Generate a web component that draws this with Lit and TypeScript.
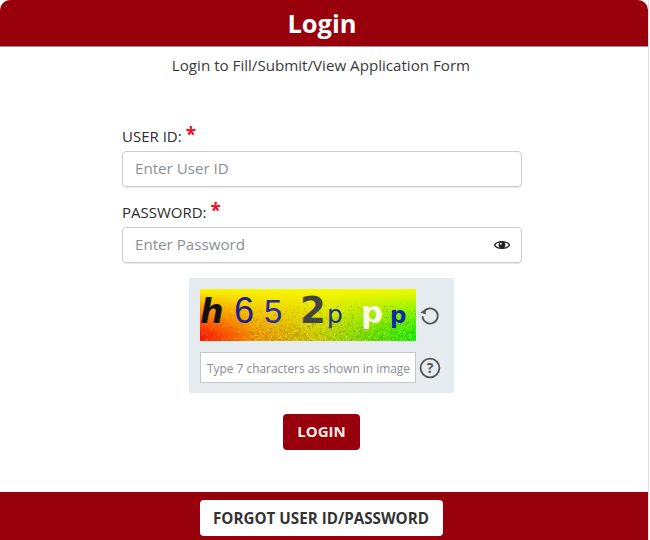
import { LitElement, html, css, svg } from "lit";
import { customElement } from "lit/decorators.js";

function speckles() {
  const out = [];
  let s = 12345;
  const r = () => ((s = (s * 1103515245 + 12345) & 0x7fffffff) / 0x7fffffff);
  for (let i = 0; i < 1700; i++) {
    const x = r() * 216;
    const t = r();
    const y = 12 + Math.sqrt(t) * 40;
    if (x < 50 && r() < 0.8) continue;
    const light = r() > 0.45;
    out.push(svg`<rect x=${x.toFixed(1)} y=${y.toFixed(1)} width="1" height="1" fill=${light ? "#f8ec90" : "#7a6614"} opacity=${(0.2 + r() * 0.4).toFixed(2)}></rect>`);
  }
  return out;
}

const SPECKS = speckles();

@customElement("app-root")
export class AppRoot extends LitElement {
  static styles = css`
    :host {
      display: block;
      width: 650px;
      height: 540px;
      overflow: hidden;
      background: #fff;
      font-family: "Open Sans", "Noto Sans", sans-serif;
      color: #333;
    }
    .card {
      width: 649px;
      height: 540px;
      box-sizing: border-box;
      border-right: 1px solid #ddd;
      display: flex;
      flex-direction: column;
    }
    .head {
      height: 47px;
      box-sizing: border-box;
      flex: none;
      background: #98000c;
      border-radius: 10px 10px 0 0;
      border-bottom: 1px solid #999;
      color: #fff;
      font-size: 25.5px;
      font-weight: 700;
      display: flex;
      align-items: center;
      justify-content: center;
      padding-right: 4px;
    }
    .sub {
      margin: 8px 0 0;
      padding-right: 6px;
      text-align: center;
      font-size: 15.15px;
      line-height: 20px;
      color: #3a3a3a;
    }
    .form {
      width: 400px;
      margin: 51px 0 0 122px;
      display: flex;
      flex-direction: column;
    }
    .label {
      font-size: 15px;
      font-weight: 500;
      line-height: 20px;
      height: 20px;
      color: #2b2b2b;
      display: flex;
      align-items: center;
      gap: 4px;
    }
    .star {
      color: #e8112d;
      font-size: 19px;
      font-weight: 700;
      line-height: 16px;
      align-self: flex-start;
    }
    .field {
      margin-top: 5px;
      height: 36px;
      box-sizing: border-box;
      border: 1px solid #c9cdd1;
      border-radius: 4px;
      box-shadow: 0 1px 1px #e8e8e8;
      padding: 0 11px 2px 12px;
      display: flex;
      align-items: center;
      justify-content: space-between;
      font-size: 15.15px;
      color: #8b8f93;
    }
    .pw {
      margin-top: 15px;
    }
    .eye {
      display: block;
      margin-top: 2px;
    }
    .captcha {
      align-self: flex-start;
      margin: 15px 0 0 67px;
      width: 265px;
      height: 115px;
      box-sizing: border-box;
      background: #e6ebef;
      border-radius: 2px;
      padding: 11px;
      display: grid;
      grid-template-columns: 216px 1fr;
      grid-template-rows: 52px 31px;
      row-gap: 11px;
      align-items: center;
    }
    .img {
      position: relative;
      width: 216px;
      height: 52px;
      overflow: hidden;
      background:
        linear-gradient(to bottom, #f8f800 0%, #f8f80000 88%),
        linear-gradient(to right, #ff1500 0%, #f09000 25%, #c8d000 55%, #10f000 100%);
    }
    .img svg {
      position: absolute;
      inset: 0;
    }
    .chars {
      position: relative;
      display: flex;
      align-items: baseline;
      height: 52px;
      box-sizing: border-box;
      padding-top: 3px;
      font-family: "DejaVu Sans", sans-serif;
      white-space: nowrap;
    }
    .chars span {
      display: block;
      flex: none;
      line-height: 1;
    }
    .c1 { width: 34px; font-size: 33px; font-weight: 700; font-style: italic; color: #111; }
    .c2 { width: 30px; font-size: 36px; color: #1d1d95; font-family: "Liberation Sans", sans-serif; }
    .c3 { width: 36px; font-size: 33px; color: #2a2aa0; font-family: "Liberation Sans", sans-serif; }
    .c4 { width: 27px; font-size: 37px; font-weight: 700; color: #444; }
    .c5 { width: 34px; font-size: 25px; color: #1c2f8c; }
    .c6 { width: 29px; font-size: 31px; font-weight: 700; color: #f8f8e8; }
    .c7 { width: 24px; font-size: 23px; font-weight: 700; color: #0b2aa8; }
    .ci {
      height: 31px;
      box-sizing: border-box;
      background: #fff;
      border: 1px solid #c4c8cc;
      padding-left: 6px;
      font-size: 11.9px;
      line-height: 31px;
      color: #8a8d90;
      white-space: nowrap;
      overflow: hidden;
    }
    .tool {
      display: block;
      justify-self: center;
    }
    .actions {
      align-self: flex-start;
      margin: 21px 0 0 161px;
      width: 77px;
      height: 36px;
      box-sizing: border-box;
      padding-bottom: 2px;
      background: #98000c;
      border-radius: 4px;
      color: #f6efe6;
      font-size: 15px;
      font-weight: 700;
      display: flex;
      align-items: center;
      justify-content: center;
    }
    .foot {
      margin-top: auto;
      height: 48px;
      flex: none;
      background: #98000c;
      display: flex;
      justify-content: center;
      padding: 8px 6px 0 0;
      box-sizing: border-box;
    }
    .forgot {
      width: 243px;
      height: 36px;
      background: #fff;
      border-radius: 4px;
      color: #333;
      font-size: 15.2px;
      font-weight: 700;
      display: flex;
      align-items: center;
      justify-content: center;
    }
  `;

  render() {
    return html`
      <div class="card">
        <div class="head">Login</div>
        <p class="sub">Login to Fill/Submit/View Application Form</p>
        <div class="form">
          <div class="label">USER ID: <span class="star">*</span></div>
          <div class="field">Enter User ID</div>
          <div class="label pw">PASSWORD: <span class="star">*</span></div>
          <div class="field">
            Enter Password
            <svg class="eye" width="16" height="12" viewBox="0 0 16 12">
              <path d="M0.5 6 C3 1.5 13 1.5 15.5 6 C13 10.5 3 10.5 0.5 6 Z" fill="#fff" stroke="#222" stroke-width="1.4"></path>
              <circle cx="8" cy="6" r="3.4" fill="#222"></circle>
              <circle cx="6.8" cy="4.8" r="1" fill="#fff"></circle>
            </svg>
          </div>
          <div class="captcha">
            <div class="img">
              <svg width="216" height="52" viewBox="0 0 216 52">${SPECKS}</svg>
              <div class="chars">
                <span class="c1">h</span><span class="c2">6</span><span class="c3">5</span><span class="c4">2</span><span class="c5">p</span><span class="c6">p</span><span class="c7">p</span>
              </div>
            </div>
            <svg class="tool" width="22" height="22" viewBox="0 0 22 22" fill="none">
              <path d="M5.2 7.2 A7.6 7.6 0 1 1 3.6 12.8" stroke="#555" stroke-width="1.8" stroke-linecap="round"></path>
              <path d="M1.4 8.6 L6.4 5 L6.9 10.6 Z" fill="#555"></path>
            </svg>
            <div class="ci">Type 7 characters as shown in image</div>
            <svg class="tool" width="22" height="22" viewBox="0 0 22 22" fill="none">
              <circle cx="11" cy="11" r="9.4" stroke="#555" stroke-width="1.8"></circle>
              <text x="11" y="16" text-anchor="middle" font-family="Open Sans, sans-serif" font-size="14" font-weight="700" fill="#555">?</text>
            </svg>
          </div>
          <div class="actions">LOGIN</div>
        </div>
        <div class="foot"><div class="forgot">FORGOT USER ID/PASSWORD</div></div>
      </div>
    `;
  }
}
